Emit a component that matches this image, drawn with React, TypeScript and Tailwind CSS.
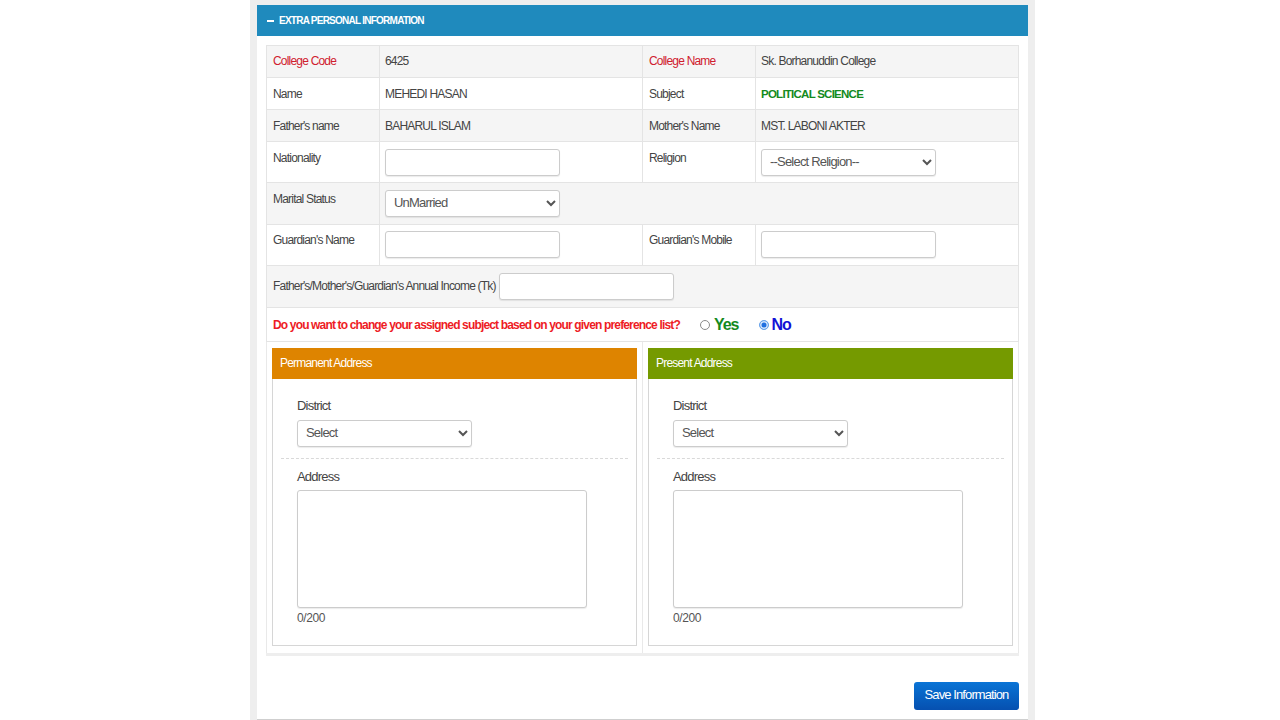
import React from "react";

const font = "font-['Liberation_Sans',Arial,sans-serif]";
const labelCell = "border border-[#e4e4e4] pl-[6px] align-top text-left font-normal";
const valueCell = "border border-[#e4e4e4] pl-[5px] align-top text-left font-normal";
const inputBox =
  "block h-[27px] w-[175px] rounded-[3px] border border-[#cccccc] bg-white shadow-[0_1px_1px_rgba(0,0,0,0.08)] outline-none";
const selectBox =
  "block h-[27px] w-[175px] rounded-[3px] border border-[#cccccc] bg-white pb-[2px] pl-[4px] text-[13px] tracking-[-0.8px] text-[#555555] shadow-[0_1px_1px_rgba(0,0,0,0.08)] outline-none";
const radioBox =
  "m-0 h-[10px] w-[10px] appearance-none rounded-full border border-[#8a8a8a] bg-white checked:border-[#6aa5ea] checked:bg-[#1f6fe0] checked:shadow-[inset_0_0_0_1.5px_#d5e6fb]";
const fieldLabel = "text-[13px] leading-[16px] tracking-[-0.8px] text-[#444444]";

function InfoRow({
  label,
  value,
  label2,
  value2,
  shaded,
  red,
  green,
}: {
  label: string;
  value: string;
  label2: string;
  value2: string;
  shaded?: boolean;
  red?: boolean;
  green?: boolean;
}) {
  return (
    <tr className={`h-[32px] ${shaded ? "bg-[#f5f5f5]" : "bg-white"}`}>
      <td className={`${labelCell} !align-middle ${red ? "pb-[1px] text-[#d0202e]" : ""}`}>{label}</td>
      <td className={`${valueCell} !align-middle ${red ? "pb-[1px]" : ""}`}>{value}</td>
      <td className={`${labelCell} !align-middle ${red ? "pb-[1px] text-[#d0202e]" : ""}`}>{label2}</td>
      <td className={`${valueCell} !align-middle ${red ? "pb-[1px]" : ""}`}>
        {green ? <span className="text-[11.5px] font-bold tracking-[-0.75px] text-[#138a1d]">{value2}</span> : value2}
      </td>
    </tr>
  );
}

function AddressBox({ title, color }: { title: string; color: string }) {
  return (
    <div className="h-[298px] border border-[#d6d6d6] bg-white">
      <div className={`-mx-px -mt-px flex h-[31px] items-center px-[8px] pb-[2px] text-white ${color}`}>{title}</div>
      <div className="px-[8px]">
        <div className="px-[16px] pt-[19px] pb-[11px]">
          <div className={fieldLabel}>District</div>
          <select className={`${selectBox} mt-[6px]`} defaultValue="Select">
            <option>Select</option>
          </select>
        </div>
        <div className="border-t border-dashed border-[#d9d9d9] px-[16px] pt-[10px]">
          <div className={fieldLabel}>Address</div>
          <textarea className="mt-[5px] block h-[118px] w-[290px] resize-none rounded-[3px] border border-[#cccccc] bg-white shadow-[0_1px_1px_rgba(0,0,0,0.08)] outline-none" />
          <div className="mt-[3px] text-[12px] leading-[14px] tracking-[-0.4px] text-[#555555]">0/200</div>
        </div>
      </div>
    </div>
  );
}

export default function App() {
  return (
    <div className={`flex h-[720px] justify-center overflow-hidden bg-white ${font}`}>
      <div className="ml-[5px] h-[720px] w-[785px] bg-[#eeeeee] px-[7px] pt-[5px]">
        <div className="h-[715px] border-b border-[#cfcfcf] bg-white">
          <div className="flex h-[31px] items-center gap-[5px] bg-[#1f8abd] px-[10px] text-[10px] font-bold tracking-[-0.75px] text-white">
            <span className="h-[2px] w-[7px] bg-white" />
            EXTRA PERSONAL INFORMATION
          </div>
          <div className="px-[9px] pt-[9px]">
            <table className="w-[752px] table-fixed border-collapse text-[12px] leading-[14px] tracking-[-0.8px] text-[#444444]">
              <colgroup>
                <col className="w-[113px]" />
                <col className="w-[263px]" />
                <col className="w-[113px]" />
                <col className="w-[263px]" />
              </colgroup>
              <tbody>
                <InfoRow shaded red label="College Code" value="6425" label2="College Name" value2="Sk. Borhanuddin College" />
                <InfoRow green label="Name" value="MEHEDI HASAN" label2="Subject" value2="POLITICAL SCIENCE" />
                <InfoRow shaded label="Father's name" value="BAHARUL ISLAM" label2="Mother's Name" value2="MST. LABONI AKTER" />
                <tr className="h-[41px] bg-white">
                  <td className={`${labelCell} pt-[9px]`}>Nationality</td>
                  <td className={valueCell}>
                    <input className={`${inputBox} mt-[7px]`} />
                  </td>
                  <td className={`${labelCell} pt-[9px]`}>Religion</td>
                  <td className={valueCell}>
                    <select className={`${selectBox} mt-[7px]`} defaultValue="--Select Religion--">
                      <option>--Select Religion--</option>
                    </select>
                  </td>
                </tr>
                <tr className="h-[42px] bg-[#f5f5f5]">
                  <td className={`${labelCell} pt-[9px]`}>Marital Status</td>
                  <td className={valueCell} colSpan={3}>
                    <select className={`${selectBox} mt-[7px]`} defaultValue="UnMarried">
                      <option>UnMarried</option>
                    </select>
                  </td>
                </tr>
                <tr className="h-[41px] bg-white">
                  <td className={`${labelCell} pt-[8px]`}>Guardian's Name</td>
                  <td className={valueCell}>
                    <input className={`${inputBox} mt-[6px]`} />
                  </td>
                  <td className={`${labelCell} pt-[8px]`}>Guardian's Mobile</td>
                  <td className={valueCell}>
                    <input className={`${inputBox} mt-[6px]`} />
                  </td>
                </tr>
                <tr className="h-[42px] bg-[#f5f5f5]">
                  <td className="border border-[#e4e4e4] px-[6px]" colSpan={4}>
                    <div className="flex items-center gap-[3px]">
                      <span className="pb-[2px]">Father's/Mother's/Guardian's Annual Income (Tk)</span>
                      <input className={inputBox} />
                    </div>
                  </td>
                </tr>
                <tr className="h-[34px] bg-white">
                  <td className="border border-[#e4e4e4] px-[6px]" colSpan={4}>
                    <div className="flex items-center">
                      <span className="font-bold tracking-[-0.84px] text-[#ee1c25]">
                        Do you want to change your assigned subject based on your given preference list?
                      </span>
                      <label className="ml-[20px] flex items-center gap-[4px] text-[16px] font-bold tracking-[-1px] text-[#138a1d]">
                        <input type="radio" name="change" className={radioBox} />
                        Yes
                      </label>
                      <label className="ml-[20px] flex items-center gap-[3px] text-[16px] font-bold tracking-[-1px] text-[#1212d6]">
                        <input type="radio" name="change" defaultChecked className={radioBox} />
                        No
                      </label>
                    </div>
                  </td>
                </tr>
                <tr className="h-[313px] bg-white">
                  <td className="border-x border-b-[3px] border-x-[#e9e9e9] border-b-[#eeeeee] pt-[6px] pr-[5px] pl-[5px] align-top" colSpan={2}>
                    <AddressBox title="Permanent Address" color="bg-[#de8400]" />
                  </td>
                  <td className="border-x border-b-[3px] border-x-[#e9e9e9] border-b-[#eeeeee] pt-[6px] pr-[5px] pl-[5px] align-top" colSpan={2}>
                    <AddressBox title="Present Address" color="bg-[#759a00]" />
                  </td>
                </tr>
              </tbody>
            </table>
            <div className="mt-[26px] flex justify-end">
              <button className="h-[28px] w-[105px] rounded-[3px] bg-gradient-to-b from-[#0a74d6] to-[#0650b0] pb-[2px] text-[13px] tracking-[-0.9px] text-white">
                Save Information
              </button>
            </div>
          </div>
        </div>
      </div>
    </div>
  );
}
